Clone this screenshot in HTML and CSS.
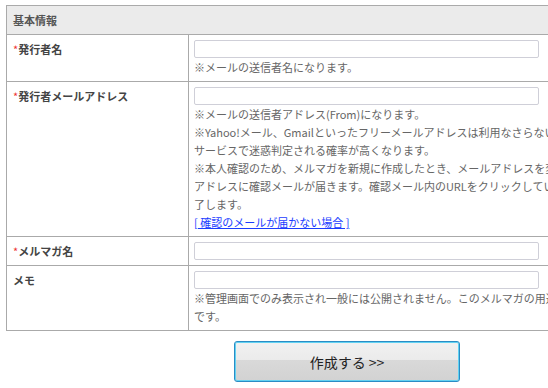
FILE: index.html
```html
<!DOCTYPE html>
<html lang="ja">
<head>
<meta charset="utf-8">
<link rel="stylesheet" href="styles.css">
</head>
<body>
<table class="form">
  <colgroup><col class="col-label"><col class="col-value"></colgroup>
  <tr><th class="section" colspan="2">基本情報</th></tr>
  <tr>
    <td class="label"><span class="req">*</span>発行者名</td>
    <td class="value"><input class="field" type="text"><div class="note">※メールの送信者名になります。</div></td>
  </tr>
  <tr>
    <td class="label"><span class="req">*</span>発行者メールアドレス</td>
    <td class="value"><input class="field" type="text"><div class="note">※メールの送信者アドレス(From)になります。<br>※Yahoo!メール、Gmailといったフリーメールアドレスは利用なさらないでください。一部のメール<br>サービスで迷惑判定される確率が高くなります。<br>※本人確認のため、メルマガを新規に作成したとき、メールアドレスを変更したときは、入力した<br>アドレスに確認メールが届きます。確認メール内のURLをクリックしていただくと、登録が完<br>了します。<br><a class="link" href="#">[ 確認のメールが届かない場合 ]</a></div></td>
  </tr>
  <tr>
    <td class="label"><span class="req">*</span>メルマガ名</td>
    <td class="value"><input class="field" type="text"></td>
  </tr>
  <tr>
    <td class="label">メモ</td>
    <td class="value"><input class="field" type="text"><div class="note">※管理画面でのみ表示され一般には公開されません。このメルマガの用途などを記入しておくと便利<br>です。</div></td>
  </tr>
</table>
<div class="actions"><button class="submit" type="button">作成する &gt;&gt;</button></div>
</body>
</html>
```
FILE: styles.css
```css
html, body {
  margin: 0;
  overflow: hidden;
  background: #fff;
}
body {
  padding: 5px 0 0 6px;
  font-family: "Noto Sans CJK JP", "Noto Sans", sans-serif;
  font-size: 11px;
  line-height: 18px;
  color: #555;
}
.form {
  border-collapse: collapse;
  table-layout: fixed;
  width: 720px;
}
.col-label { width: 182px; }
.form th, .form td {
  border: 1px solid #aaa;
  text-align: left;
  vertical-align: top;
}
.section {
  background: #ebebeb;
  padding: 5px 6px;
  font-weight: bold;
  color: #555;
}
.label {
  padding: 5px 6px;
  font-weight: bold;
  color: #444;
}
.req { color: #e33; font-weight: normal; }
.value {
  padding: 5px 5px 5px 5px;
}
.field {
  display: block;
  box-sizing: border-box;
  width: 345px;
  height: 18px;
  margin: 0;
  border: 1px solid #cfcfd8;
  border-radius: 2px;
  background: #fff;
}
.note {
  white-space: nowrap;
  color: #666;
}
.link {
  color: #1a3cff;
  text-decoration: underline;
}
.actions {
  padding: 10px 0 0 228px;
}
.submit {
  display: block;
  width: 226px;
  height: 41px;
  border: 1px solid #2a8cc4;
  border-radius: 3px;
  box-shadow: inset 0 0 0 1px #62d2f2;
  background: linear-gradient(#f1f1f1 0%, #ebebeb 45%, #d9d9d9 46%, #d2d2d2 100%);
  font-family: "Noto Sans CJK JP", "Noto Sans", sans-serif;
  font-size: 14px;
  color: #222;
  padding: 0;
}
```
